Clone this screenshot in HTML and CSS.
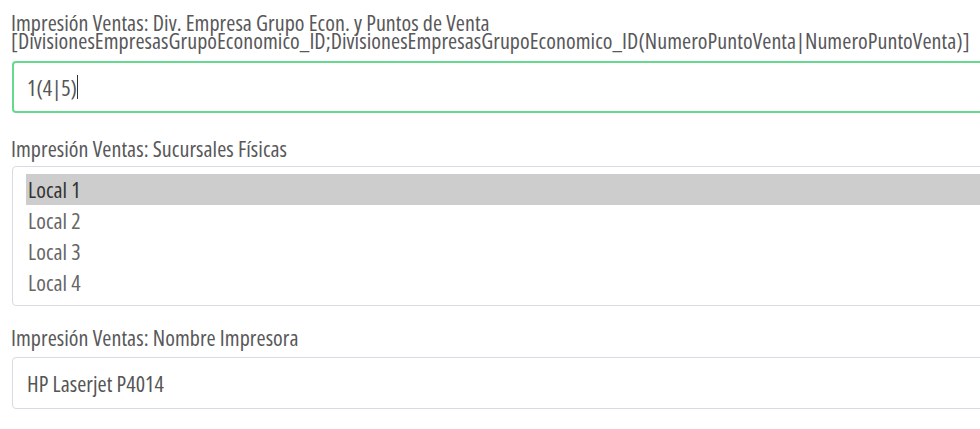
FILE: index.html
```html
<!DOCTYPE html>
<html lang="es">
<head>
<meta charset="utf-8">
<title>Impresión Ventas</title>
<link rel="stylesheet" href="styles.css">
</head>
<body>
<form class="form">
  <div class="group group-first">
    <label class="label label-first">Impresión Ventas: Div. Empresa Grupo Econ. y Puntos de Venta<br>[DivisionesEmpresasGrupoEconomico_ID;DivisionesEmpresasGrupoEconomico_ID(NumeroPuntoVenta|NumeroPuntoVenta)]</label>
    <div class="control control-focus"><span class="value">1(4|5)</span><span class="caret"></span></div>
  </div>
  <div class="group group-second">
    <label class="label">Impresión Ventas: Sucursales Físicas</label>
    <div class="listbox" role="listbox">
      <div class="option option-selected" role="option">Local 1</div>
      <div class="option" role="option">Local 2</div>
      <div class="option" role="option">Local 3</div>
      <div class="option" role="option">Local 4</div>
    </div>
  </div>
  <div class="group group-third">
    <label class="label">Impresión Ventas: Nombre Impresora</label>
    <div class="control"><span class="value">HP Laserjet P4014</span></div>
  </div>
</form>
</body>
</html>
```
FILE: styles.css
```css
html, body {
  margin: 0;
  padding: 0;
  background: #ffffff;
  overflow: hidden;
}
body {
  width: 980px;
  height: 429px;
  font-family: "Open Sans", "Liberation Sans", sans-serif;
  font-stretch: 80%;
  letter-spacing: 0.06px;
  color: #555555;
}
.form {
  width: 1000px;
  padding: 0 0 0 11px;
  display: flex;
  flex-direction: column;
}
.group {
  display: flex;
  flex-direction: column;
}
.group-first {
  margin-top: 13px;
}
.group-second {
  margin-top: 27px;
}
.group-third {
  margin-top: 23px;
}
.label {
  display: block;
  font-size: 22px;
  line-height: 17px;
  color: #58585a;
  margin-bottom: 9px;
  white-space: nowrap;
}
.label-first {
  line-height: 18px;
  margin-bottom: 12px;
}
.group-third .label {
  margin-bottom: 11px;
}
.control {
  box-sizing: border-box;
  margin-left: 1px;
  height: 52px;
  border: 1px solid #d8dbe1;
  border-radius: 4px;
  padding: 0 14px;
  display: flex;
  align-items: center;
  font-size: 22px;
  color: #555555;
}
.control-focus {
  border: 2px solid #66d98e;
  padding-left: 13px;
}
.caret {
  display: inline-block;
  width: 1px;
  height: 24px;
  background: #333333;
}
.listbox {
  box-sizing: border-box;
  margin-left: 1px;
  height: 140px;
  border: 1px solid #d8dbe1;
  border-radius: 4px;
  padding: 7px 0 8px 13px;
  display: flex;
  flex-direction: column;
}
.option {
  height: 31px;
  line-height: 31px;
  padding-left: 2px;
  font-size: 22px;
  color: #666666;
}
.option-selected {
  background: #cdcdcd;
  color: #333333;
}
```
